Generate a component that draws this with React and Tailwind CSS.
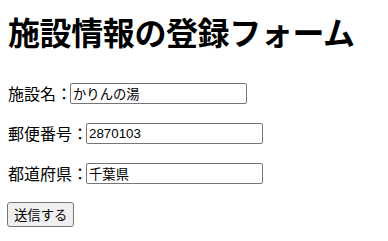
import React from "react";

export default function App() {
  const cjk = "font-['Noto_Sans_CJK_JP',sans-serif]";
  const inputCls =
    "h-[21px] w-[177px] rounded-[2px] border border-[#767676] bg-white px-[2px] text-[13.33px] leading-[19px] text-black outline-none font-['Liberation_Sans','Noto_Sans_CJK_JP',sans-serif]";
  return (
    <div className={`min-h-[241px] w-[388px] bg-white pl-[8px] pt-[15px] text-black ${cjk}`}>
      <h1 className="m-0 text-[32px] font-bold leading-[32px] tracking-[-0.4px] whitespace-nowrap">
        施設情報の登録フォーム
      </h1>
      <form className="flex flex-col" onSubmit={(e) => e.preventDefault()}>
        <div className="mt-[36px] flex h-[21px] items-center">
          <label className="w-[62px] whitespace-nowrap text-[16px] leading-[21px]">施設名：</label>
          <input className={inputCls} defaultValue="かりんの湯" />
        </div>
        <div className="mt-[19px] flex h-[21px] items-center">
          <label className="w-[78px] whitespace-nowrap text-[16px] leading-[21px]">郵便番号：</label>
          <input className={inputCls} defaultValue="2870103" />
        </div>
        <div className="mt-[19px] flex h-[21px] items-center">
          <label className="w-[78px] whitespace-nowrap text-[16px] leading-[21px]">都道府県：</label>
          <input className={inputCls} defaultValue="千葉県" />
        </div>
        <div className="mt-[18px] flex">
          <button
            type="submit"
            className="-ml-[1px] h-[25px] rounded-[3px] border border-[#767676] bg-[#efefef] px-[6px] text-[13.33px] leading-[23px] text-black"
          >
            送信する
          </button>
        </div>
      </form>
    </div>
  );
}
